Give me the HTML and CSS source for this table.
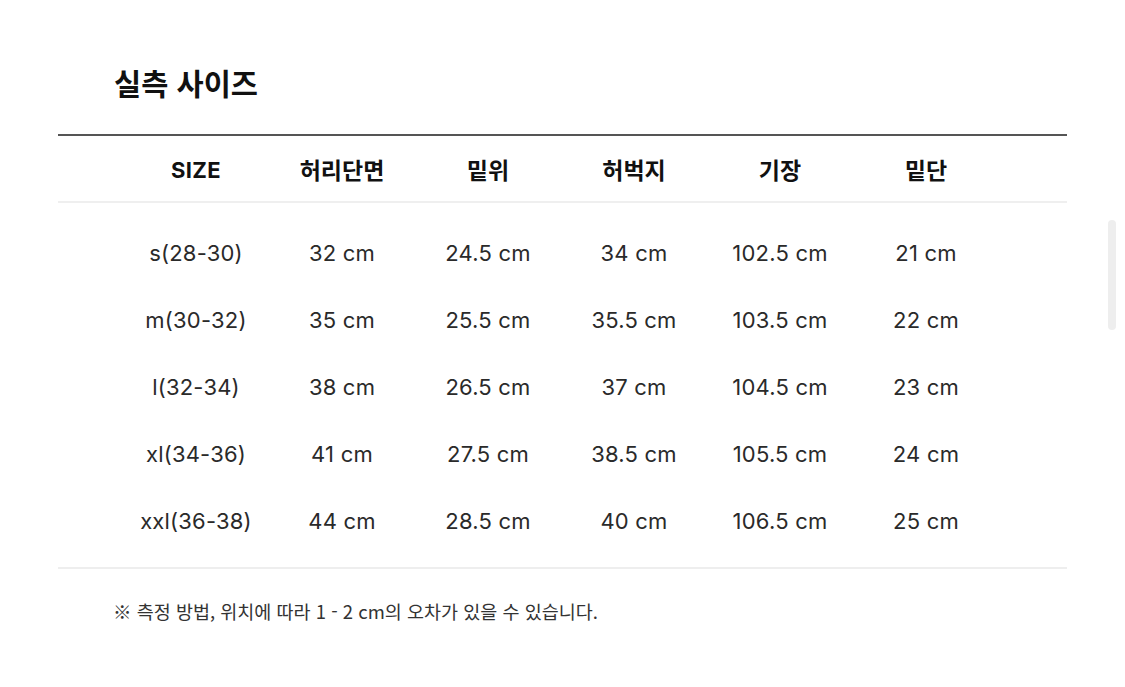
FILE: index.html
```html
<!DOCTYPE html>
<html lang="ko">
<head>
<meta charset="utf-8">
<link rel="stylesheet" href="styles.css">
</head>
<body>
<div class="page">
  <h2 class="title">실측 사이즈</h2>
  <div class="table">
    <div class="row head">
      <div class="cell latin">SIZE</div>
      <div class="cell">허리단면</div>
      <div class="cell">밑위</div>
      <div class="cell">허벅지</div>
      <div class="cell">기장</div>
      <div class="cell">밑단</div>
    </div>
    <div class="body">
      <div class="row"><div class="cell">s(28-30)</div><div class="cell">32 cm</div><div class="cell">24.5 cm</div><div class="cell">34 cm</div><div class="cell">102.5 cm</div><div class="cell">21 cm</div></div>
      <div class="row"><div class="cell">m(30-32)</div><div class="cell">35 cm</div><div class="cell">25.5 cm</div><div class="cell">35.5 cm</div><div class="cell">103.5 cm</div><div class="cell">22 cm</div></div>
      <div class="row"><div class="cell">l(32-34)</div><div class="cell">38 cm</div><div class="cell">26.5 cm</div><div class="cell">37 cm</div><div class="cell">104.5 cm</div><div class="cell">23 cm</div></div>
      <div class="row"><div class="cell">xl(34-36)</div><div class="cell">41 cm</div><div class="cell">27.5 cm</div><div class="cell">38.5 cm</div><div class="cell">105.5 cm</div><div class="cell">24 cm</div></div>
      <div class="row"><div class="cell">xxl(36-38)</div><div class="cell">44 cm</div><div class="cell">28.5 cm</div><div class="cell">40 cm</div><div class="cell">106.5 cm</div><div class="cell">25 cm</div></div>
    </div>
  </div>
  <p class="note">※ 측정 방법, 위치에 따라 1 - 2 cm의 오차가 있을 수 있습니다.</p>
</div>
<div class="scroll-thumb"></div>
</body>
</html>
```

FILE: styles.css
```css
html, body {
  margin: 0;
  padding: 0;
  background: #fff;
}
body {
  width: 1125px;
  height: 687px;
  overflow: hidden;
  position: relative;
  font-family: Inter, "Noto Sans CJK KR", sans-serif;
  color: #222;
}
.page {
  padding: 61px 58px 0 58px;
}
.title {
  margin: 0 0 0 56px;
  font-family: "Noto Sans CJK KR", sans-serif;
  font-size: 29.5px;
  font-weight: 700;
  line-height: 42px;
  color: #111;
}
.table {
  margin-top: 31px;
  border-top: 2px solid #555;
  border-bottom: 2px solid #eee;
}
.row {
  display: grid;
  grid-template-columns: repeat(6, 146px);
  padding-left: 65px;
}
.head {
  height: 65px;
  align-items: center;
  border-bottom: 2px solid #efefef;
  font-family: "Noto Sans CJK KR", sans-serif;
  font-weight: 700;
  font-size: 23px;
  color: #111;
}
.head .latin {
  font-family: Inter, sans-serif;
  font-size: 22px;
  letter-spacing: 0.4px;
  padding-top: 3px;
}
.body {
  padding: 16px 0 13px;
}
.body .row {
  height: 67px;
  align-items: center;
  font-size: 22px;
  letter-spacing: 0.2px;
  color: #2a2a2a;
}
.cell {
  text-align: center;
}
.note {
  margin: 29px 0 0 55px;
  font-family: "Noto Sans CJK KR", sans-serif;
  font-size: 18.5px;
  color: #333;
}
.scroll-thumb {
  position: absolute;
  left: 1108px;
  top: 220px;
  width: 8px;
  height: 110px;
  border-radius: 4px;
  background: #eee;
}
```
